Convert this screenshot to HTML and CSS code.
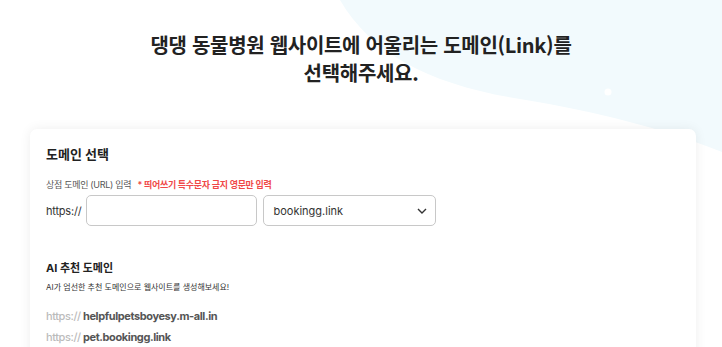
FILE: index.html
```html
<!DOCTYPE html>
<html lang="ko">
<head>
    <meta charset="UTF-8">
    <title>도메인 선택</title>
    <link rel="stylesheet" href="styles.css">
</head>
<body>
    <div class="page">
        <svg class="bg-shape" width="722" height="347" viewBox="0 0 722 347">
            <path d="M340,0 C372,55 432,85 520,99 C600,112 660,128 722,152 L722,0 Z" fill="#f2fafd"/>
            <circle cx="608" cy="92" r="3.5" fill="#ffffff"/>
        </svg>
        <h1 class="title">댕댕 동물병원 웹사이트에 어울리는 도메인(Link)를<br>선택해주세요.</h1>
        <div class="card">
            <h2 class="card-title">도메인 선택</h2>
            <div class="field-label">
                상점 도메인 (URL) 입력
                <span class="warn">* 띄어쓰기 특수문자 금지 영문만 입력</span>
            </div>
            <div class="url-row">
                <span class="proto">https://</span>
                <input class="url-input" type="text">
                <div class="select">
                    <span>bookingg.link</span>
                    <svg width="10" height="6" viewBox="0 0 10 6"><path d="M1,1 L5,5 L9,1" fill="none" stroke="#333" stroke-width="1.4"/></svg>
                </div>
            </div>

            <h3 class="ai-title">AI 추천 도메인</h3>
            <p class="ai-desc">AI가 엄선한 추천 도메인으로 웹사이트를 생성해보세요!</p>
            <ul class="ai-list">
                <li><span class="light">https://</span> helpfulpetsboyesy.m-all.in</li>
                <li><span class="light">https://</span> pet.bookingg.link</li>
            </ul>
        </div>
    </div>
</body>
</html>
```

FILE: styles.css
```css
body{
    margin: 0;
    background: #ffffff;
    font-family: Inter, "Noto Sans CJK KR", sans-serif;
    color: #222;
}
.page{
    position: relative;
    width: 722px;
    height: 347px;
    overflow: hidden;
}
.bg-shape{
    position: absolute;
    left: 0;
    top: 0;
}
.title{
    position: relative;
    margin: 0;
    padding-top: 31px;
    text-align: center;
    font-family: "Noto Sans CJK KR", sans-serif;
    font-size: 20px;
    line-height: 28px;
    font-weight: 700;
    color: #222;
    letter-spacing: -0.3px;
}
.card{
    position: relative;
    margin: 42px 0 0 30px;
    width: 666px;
    height: 260px;
    box-sizing: border-box;
    padding: 16px 16px;
    background: #fff;
    border-radius: 7px;
    box-shadow: 0 0 12px rgba(0,0,0,0.07);
}
.card-title{
    margin: 0;
    font-size: 13px;
    font-weight: 700;
    line-height: 18px;
    color: #222;
}
.field-label{
    margin-top: 16px;
    font-size: 9px;
    line-height: 12px;
    color: #555;
    letter-spacing: -0.3px;
}
.warn{
    margin-left: 4px;
    color: #f04848;
    font-weight: 600;
}
.url-row{
    display: flex;
    align-items: center;
    gap: 6px;
    margin-top: 4px;
}
.proto{
    font-size: 11px;
    color: #333;
    letter-spacing: -0.2px;
    margin-right: -1px;
}
.url-input{
    width: 171px;
    height: 31px;
    box-sizing: border-box;
    border: 1px solid #c8c8c8;
    border-radius: 5px;
    margin: 0;
}
.select{
    width: 173px;
    height: 31px;
    box-sizing: border-box;
    border: 1px solid #c8c8c8;
    border-radius: 5px;
    display: flex;
    align-items: center;
    justify-content: space-between;
    padding: 0 8px 0 9px;
    font-size: 11px;
    color: #333;
}
.ai-title{
    margin: 35px 0 0;
    font-size: 11px;
    font-weight: 700;
    line-height: 14px;
    color: #222;
}
.ai-desc{
    margin: 6px 0 0;
    font-size: 8px;
    line-height: 12px;
    color: #333;
}
.ai-list{
    list-style: none;
    margin: 13px 0 0;
    padding: 0;
}
.ai-list li{
    font-size: 11px;
    font-weight: 700;
    line-height: 21px;
    color: #555;
    letter-spacing: -0.4px;
}
.light{
    color: #bbb;
    font-weight: 500;
}
```
